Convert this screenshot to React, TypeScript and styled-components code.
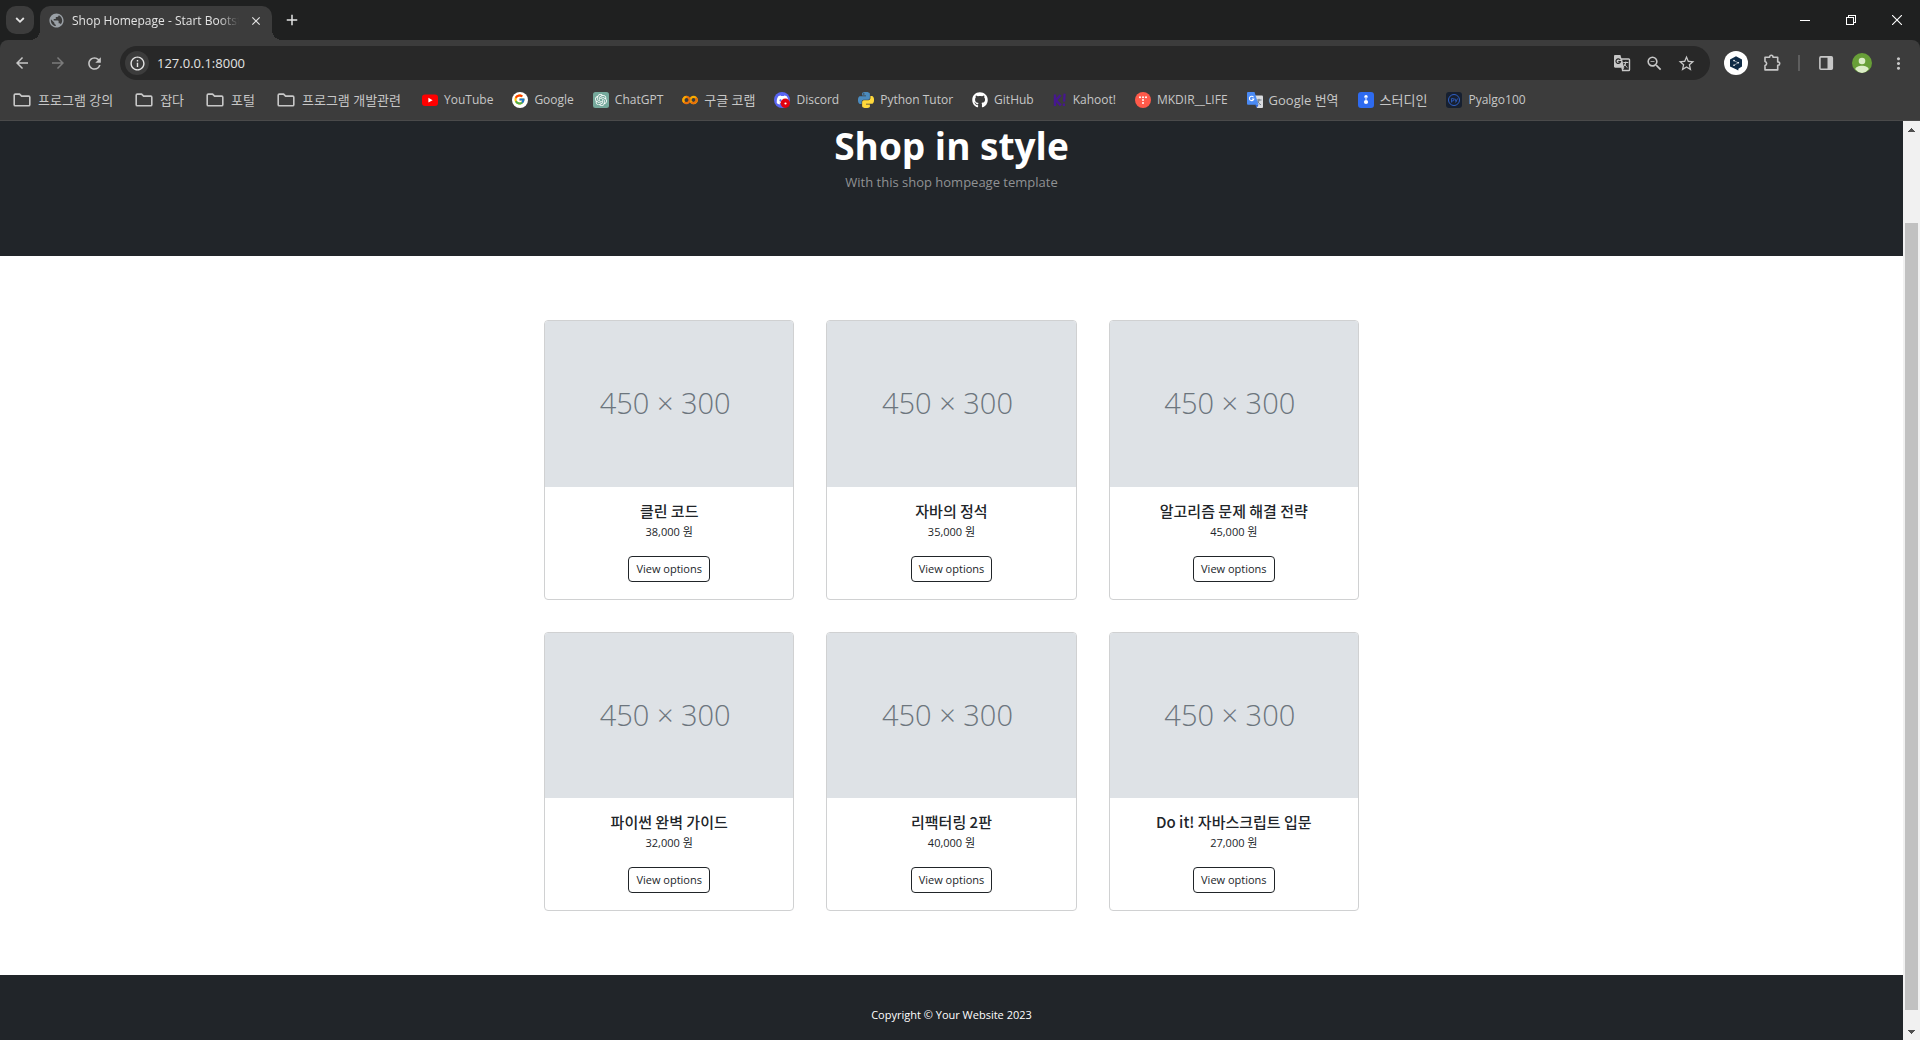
import React from 'react';
import styled, { createGlobalStyle } from 'styled-components';
import { FaGithub } from 'react-icons/fa';
import { FcGoogle } from 'react-icons/fc';
import { SiOpenai, SiDiscord } from 'react-icons/si';
import { MdArrowBack, MdArrowForward, MdRefresh, MdInfoOutline, MdStarBorder, MdZoomOut, MdMoreVert, MdPublic, MdClose, MdAdd } from 'react-icons/md';

const sans = '"Open Sans", "Noto Sans CJK KR", sans-serif';
const korean = '"Noto Sans CJK KR", "Open Sans", sans-serif';

const GlobalStyle = createGlobalStyle`
  *, *::before, *::after { box-sizing: border-box; }
  body { margin: 0; font-family: ${sans}; background: #fff; }
  button, input { font-family: inherit; }
  h1, h2, p, ul { margin: 0; padding: 0; }
`;

const Window = styled.div`
  display: flex;
  flex-direction: column;
  height: 100vh;
  overflow: hidden;
  background: #1f2020;
`;

/* ---------- tab strip ---------- */

const TabStrip = styled.div`
  display: flex;
  height: 40px;
  padding: 6px 0 0 6px;
  color: #e3e3e3;
`;

const PlainButton = styled.button`
  display: flex;
  align-items: center;
  justify-content: center;
  flex: none;
  padding: 0;
  border: 0;
  background: none;
  color: inherit;
`;

const TabSearch = styled(PlainButton)`
  width: 28px;
  height: 28px;
  border-radius: 10px;
  background: #3c3c3c;
`;

const Tab = styled.div`
  position: relative;
  display: flex;
  align-items: center;
  gap: 7px;
  width: 232px;
  margin-left: 6px;
  padding: 0 6px 5px 8px;
  border-radius: 10px 10px 0 0;
  background: #3c3c3c;

  &::before,
  &::after {
    content: '';
    position: absolute;
    bottom: 0;
    width: 10px;
    height: 10px;
  }
  &::before {
    right: 100%;
    background: radial-gradient(circle at 0 0, transparent 10px, #3c3c3c 10px);
  }
  &::after {
    left: 100%;
    background: radial-gradient(circle at 100% 0, transparent 10px, #3c3c3c 10px);
  }
`;

const TabTitle = styled.span`
  flex: 1;
  overflow: hidden;
  white-space: nowrap;
  font-size: 12px;
  line-height: 18px;
  mask-image: linear-gradient(90deg, #000 88%, transparent);
`;

const TabClose = styled(PlainButton)`
  width: 20px;
  height: 20px;
`;

const NewTab = styled(PlainButton)`
  width: 28px;
  height: 28px;
  margin-left: 6px;
`;

const WindowControls = styled.div`
  display: flex;
  margin-left: auto;
  color: #fff;
`;

const WindowButton = styled(PlainButton)`
  width: 46px;
  height: 28px;
`;

/* ---------- toolbar ---------- */

const Toolbar = styled.div`
  display: flex;
  align-items: center;
  gap: 8px;
  height: 46px;
  padding: 0 8px;
  border-radius: 8px 8px 0 0;
  background: #3c3c3c;
  color: #c7c7c7;
`;

const ToolButton = styled(PlainButton)<{ $dim?: boolean }>`
  width: 28px;
  height: 28px;
  color: ${(p) => (p.$dim ? '#7b7b7b' : '#c7c7c7')};
`;

const AddressBar = styled.div`
  display: flex;
  align-items: center;
  gap: 4px;
  flex: 1;
  height: 34px;
  margin: 0 4px;
  padding: 0 10px 0 5px;
  border-radius: 17px;
  background: #282828;
`;

const SiteInfo = styled(PlainButton)`
  width: 24px;
  height: 24px;
  margin-right: 4px;
  border-radius: 50%;
  background: #3c3c3c;
  color: #e3e3e3;
`;

const AddressInput = styled.input`
  flex: 1;
  min-width: 0;
  padding: 0;
  border: 0;
  outline: 0;
  background: none;
  color: #e3e3e3;
  font-size: 13px;
  line-height: 20px;
`;

const Divider = styled.span`
  width: 2px;
  height: 16px;
  margin: 0 4px;
  background: #5e5e5e;
`;

/* ---------- bookmarks ---------- */

const Bookmarks = styled.nav`
  display: flex;
  align-items: center;
  gap: 19px;
  height: 35px;
  padding: 0 12px 6px;
  border-bottom: 1px solid #4a4a4a;
  background: #3c3c3c;
`;

const Bookmark = styled.a<{ $folder: boolean; $korean: boolean }>`
  display: flex;
  align-items: center;
  gap: 6px;
  margin-right: ${(p) => (p.$folder ? '2px' : '0')};
  color: #c7c7c7;
  font-size: ${(p) => (p.$korean ? '13px' : '12px')};
  line-height: 18px;
  white-space: nowrap;
  text-decoration: none;
`;

/* ---------- page ---------- */

const Viewport = styled.div`
  display: flex;
  flex: 1;
  min-height: 0;
`;

const Page = styled.div`
  flex: 1;
  min-width: 0;
  overflow: hidden;
  background: #fff;
`;

const Hero = styled.header`
  padding: 2px 16px 64px;
  background: #212529;
  text-align: center;
`;

const HeroTitle = styled.h1`
  margin-bottom: 4px;
  color: #fff;
  font-size: 37px;
  font-weight: 700;
  line-height: 45px;
`;

const HeroLead = styled.p`
  color: #909294;
  font-size: 13px;
  line-height: 20px;
`;

const Products = styled.main`
  display: grid;
  grid-template-columns: repeat(3, 1fr);
  gap: 32px;
  width: 100%;
  max-width: 879px;
  margin: 0 auto;
  padding: 64px 32px;
`;

const Card = styled.article`
  display: flex;
  flex-direction: column;
  overflow: hidden;
  border: 1px solid #d0d1d2;
  border-radius: 4px;
  background: #fff;
`;

const Placeholder = styled.div`
  display: flex;
  align-items: center;
  justify-content: center;
  aspect-ratio: 3 / 2;
  padding: 0 8px 2px 0;
  background: #dee2e6;
  color: #6c757d;
  font-size: 29px;
  font-weight: 300;
`;

const CardBody = styled.div`
  display: flex;
  flex-direction: column;
  align-items: center;
  padding: 15px 16px 17px;
  color: #212529;
`;

const ProductName = styled.h2`
  margin-bottom: 4px;
  font-family: ${korean};
  font-size: 15px;
  font-weight: 500;
  line-height: 17px;
`;

const Price = styled.p`
  margin-bottom: 16px;
  font-size: 11px;
  line-height: 17px;
`;

const OptionsLink = styled.a`
  padding: 4px 7px;
  border: 1px solid #212529;
  border-radius: 4px;
  color: #212529;
  font-size: 11px;
  line-height: 16px;
  text-decoration: none;
`;

const Footer = styled.footer`
  padding: 32px 16px;
  background: #212529;
  color: #fff;
  font-size: 11px;
  line-height: 16px;
  text-align: center;
`;

/* ---------- scrollbar ---------- */

const Scrollbar = styled.div`
  display: flex;
  flex-direction: column;
  align-items: center;
  width: 17px;
  background: #f1f1f1;
`;

const ScrollArrow = styled(PlainButton)`
  width: 17px;
  height: 17px;
  color: #505050;
`;

const ScrollTrack = styled.div`
  display: grid;
  flex: 1;
  width: 13px;
  grid-template-rows: 85fr 787fr 13fr;
`;

const ScrollThumb = styled.div`
  grid-row: 2;
  background: #c1c1c1;
`;

/* ---------- icons ---------- */

const FolderIcon = () => (
  <svg width="20" height="20" viewBox="0 0 20 20" fill="none" stroke="#c7c7c7" strokeWidth="1.6" strokeLinejoin="round">
    <path d="M2.2 5.2c0-.7.4-1.1 1.1-1.1h4.3l2 2h7.1c.7 0 1.1.4 1.1 1.1v7.5c0 .7-.4 1.1-1.1 1.1H3.3c-.7 0-1.1-.4-1.1-1.1z" />
  </svg>
);

const YouTubeIcon = () => (
  <svg width="16" height="16" viewBox="0 0 16 16">
    <rect y="2.5" width="16" height="11.5" rx="3" fill="#f00" />
    <path d="M6.4 5.8v4.8L10.6 8.2z" fill="#fff" />
  </svg>
);

const GoogleIcon = () => (
  <svg width="16" height="16" viewBox="0 0 16 16">
    <circle cx="8" cy="8" r="8" fill="#fff" />
    <FcGoogle x="1.5" y="1.5" width="13" height="13" />
  </svg>
);

const ChatIcon = () => (
  <svg width="16" height="16" viewBox="0 0 16 16">
    <rect width="16" height="16" rx="2.5" fill="#75a99c" />
    <SiOpenai x="2" y="2" width="12" height="12" color="#fff" />
  </svg>
);

const ColabIcon = () => (
  <svg width="16" height="16" viewBox="0 0 16 16" fill="none" strokeWidth="2.2">
    <circle cx="11.6" cy="8" r="3.2" stroke="#f9ab00" />
    <circle cx="4.4" cy="8" r="3.2" stroke="#e8710a" />
    <path d="M9.3 10.2A3.2 3.2 0 0 0 13.9 5.8" stroke="#e8710a" />
    <path d="M2.2 10.2A3.2 3.2 0 0 1 4.4 4.8" stroke="#f9ab00" />
  </svg>
);

const DiscordIcon = () => (
  <svg width="16" height="16" viewBox="0 0 16 16">
    <circle cx="8" cy="8" r="8" fill="#5865f2" />
    <SiDiscord x="2.5" y="2" width="11" height="11" color="#fff" />
    <circle cx="11.3" cy="11.3" r="4.7" fill="#e0000f" />
    <circle cx="11.5" cy="11.5" r="1.1" fill="#fff" />
  </svg>
);

const PythonIcon = () => (
  <svg width="16" height="16" viewBox="0 0 24 24">
    <path fill="#4b8bbe" d="M14.25.18l.9.2.73.26.59.3.45.32.34.34.25.34.16.33.1.3.04.26.02.2-.01.13V8.5l-.05.63-.13.55-.21.46-.26.38-.3.31-.33.25-.35.19-.35.14-.33.1-.3.07-.26.04-.21.02H8.77l-.69.05-.59.14-.5.22-.41.27-.33.32-.27.35-.2.36-.15.37-.1.35-.07.32-.04.27-.02.21v3.06H3.17l-.21-.03-.28-.07-.32-.12-.35-.18-.36-.26-.36-.36-.35-.46-.32-.59-.28-.73-.21-.88-.14-1.05-.05-1.23.06-1.22.16-1.04.24-.87.32-.71.36-.57.4-.44.42-.33.42-.24.4-.16.36-.1.32-.05.24-.01h.16l.06.01h8.16v-.83H6.18l-.01-2.75-.02-.37.05-.34.11-.31.17-.28.25-.26.31-.23.38-.2.44-.18.51-.15.58-.12.64-.1.71-.06.77-.04.84-.02 1.27.05zm-6.3 1.98l-.23.33-.08.41.08.41.23.34.33.22.41.09.41-.09.33-.22.23-.34.08-.41-.08-.41-.23-.33-.33-.22-.41-.09-.41.09z" />
    <path fill="#ffd83b" d="M21.04 6.11l.28.06.32.12.35.18.36.27.36.35.35.47.32.59.28.73.21.88.14 1.04.05 1.23-.06 1.23-.16 1.04-.24.86-.32.71-.36.57-.4.45-.42.33-.42.24-.4.16-.36.09-.32.05-.24.02-.16-.01h-8.22v.82h5.84l.01 2.76.02.36-.05.34-.11.31-.17.29-.25.25-.31.24-.38.2-.44.17-.51.15-.58.13-.64.09-.71.07-.77.04-.84.01-1.27-.04-1.07-.14-.9-.2-.73-.25-.59-.3-.45-.33-.34-.34-.25-.34-.16-.33-.1-.3-.04-.25-.02-.2.01-.13v-5.34l.05-.64.13-.54.21-.46.26-.38.3-.32.33-.24.35-.2.35-.14.33-.1.3-.06.26-.04.21-.02.13-.01h5.84l.69-.05.59-.14.5-.21.41-.28.33-.32.27-.35.2-.36.15-.36.1-.35.07-.32.04-.28.02-.21V6.07h2.09l.14.01z" />
  </svg>
);

const GitHubIcon = () => <FaGithub size={16} color="#fff" />;

const KahootIcon = () => (
  <svg width="14" height="16" viewBox="0 0 14 16" fill="none" stroke="#46178f" strokeWidth="2.4">
    <path d="M2 2.5v11.5M7.6 3L3 8.2l4.8 5.2" />
    <path d="M11.6 1.6l-.5 8M10.900 11.6v2.4" strokeWidth="2.2" />
  </svg>
);

const TistoryIcon = () => (
  <svg width="16" height="16" viewBox="0 0 16 16">
    <circle cx="8" cy="8" r="8" fill="#ff5a4a" />
    <g fill="#fff">
      <circle cx="5" cy="5.2" r="1" />
      <circle cx="8" cy="5.2" r="1" />
      <circle cx="11" cy="5.2" r="1" />
      <circle cx="8" cy="8.1" r="1" />
      <circle cx="8" cy="11" r="1" />
    </g>
  </svg>
);

const TranslateIcon = () => (
  <svg width="16" height="16" viewBox="0 0 16 16">
    <path d="M6 3.5h9a1 1 0 0 1 1 1V15a1 1 0 0 1-1 1h-5z" fill="#dadce0" />
    <path d="M9.5 8h5M12 6.8V8c-.2 2-1.2 3.2-2.2 4M10.5 9.2c.8 1.8 2 2.8 3.4 3.6" stroke="#6b7785" fill="none" />
    <path d="M1 0h6.5l4 12.8H1a1 1 0 0 1-1-1V1a1 1 0 0 1 1-1z" fill="#4a8af4" />
    <path d="M6.5 5.2A2.2 2.2 0 1 0 6.8 7H4.8" stroke="#fff" strokeWidth="1.1" fill="none" />
    <path d="M8.2 12.8h3.3L9.8 16z" fill="#3367d6" />
  </svg>
);

const StudyIcon = () => (
  <svg width="16" height="16" viewBox="0 0 16 16">
    <rect width="16" height="16" rx="3" fill="#2e6bf0" />
    <circle cx="8" cy="4.8" r="1.7" fill="#fff" />
    <circle cx="8" cy="10" r="2.1" fill="#fff" />
    <path d="M7.2 5h1.6v3H7.2z" fill="#a9c4ff" />
  </svg>
);

const PyalgoIcon = () => (
  <svg width="16" height="16" viewBox="0 0 16 16" fill="none" stroke="#2f5fc4">
    <rect width="16" height="16" rx="3" fill="#172030" stroke="none" />
    <circle cx="8" cy="8" r="5.5" />
    <path d="M5.6 10.5v-4h1.2a1.2 1.2 0 0 1 0 2.400H5.600M8.800 6.500l1.300 3M11.600 6.500l-2 4" strokeWidth=".9" />
  </svg>
);

const PageTranslateIcon = () => (
  <svg width="18" height="18" viewBox="0 0 18 18">
    <path d="M8.5 5h7.2c.5 0 .8.3.8.8v9.900c0 .5-.3.8-.8.8H9.600z" fill="none" stroke="#c7c7c7" strokeWidth="1.4" />
    <path d="M10.300 8.500h5M12.800 7.500v1c-.1 1.600-.8 2.900-1.800 3.800M11.300 9.700c.7 1.700 1.800 3 3.200 4" fill="none" stroke="#c7c7c7" />
    <path d="M2.200 1h5.200l3.900 12.700H2.200c-.7 0-1.200-.5-1.200-1.200V2.200C1 1.500 1.500 1 2.200 1z" fill="#c7c7c7" />
    <path d="M7.200 5.900A2.300 2.300 0 1 0 7.500 7.700H5.300" fill="none" stroke="#282828" strokeWidth="1.2" />
    <path d="M8.300 13.700h3l-1.800 2.600z" fill="#c7c7c7" />
  </svg>
);

const ExtensionIcon = () => (
  <svg width="20" height="20" viewBox="0 0 20 20" fill="none" stroke="#c7c7c7" strokeWidth="1.6" strokeLinejoin="round">
    <path d="M3 4.300h4.600V4a1.700 1.700 0 0 1 3.400 0v.3h4.700V8.900H16a1.700 1.700 0 0 1 0 3.400h-.3v4.600H3v-4.300a2.100 2.100 0 0 0 0-4.100z" />
  </svg>
);

const DeeplIcon = () => (
  <svg width="26" height="26" viewBox="0 0 26 26">
    <circle cx="13" cy="13" r="12" fill="#fff" />
    <path d="M13 6.200l6 3.400v7l-3.600 2.100-.1 1.900-2.300-1.300-6-2.700v-7z" fill="#0f2b46" />
    <path d="M11 10.600l4.200 2.200-4.200 2.400" fill="none" stroke="#fff" strokeWidth=".5" />
    <g fill="#fff">
      <circle cx="11" cy="10.600" r=".8" />
      <circle cx="15.300" cy="12.800" r=".8" />
      <circle cx="11" cy="15.200" r=".8" />
    </g>
  </svg>
);

const SidePanelIcon = () => (
  <svg width="16" height="16" viewBox="0 0 16 16">
    <rect x="1.9" y="1.9" width="12.4" height="12.4" rx="1" fill="none" stroke="#c7c7c7" strokeWidth="1.6" />
    <path d="M9.5 2H14v12H9.5z" fill="#c7c7c7" />
  </svg>
);

const AvatarIcon = () => (
  <svg width="20" height="20" viewBox="0 0 20 20">
    <circle cx="10" cy="10" r="10" fill="#689f38" />
    <circle cx="10" cy="8" r="3.3" fill="#dcedc8" />
    <path d="M3.3 16.2c0-2.2 3.6-3.5 6.7-3.5s6.7 1.3 6.7 3.5A9.900 9.900 0 0 1 10 20a9.900 9.900 0 0 1-6.700-3.800z" fill="#dcedc8" />
  </svg>
);

const ChevronIcon = () => (
  <svg width="10" height="8" viewBox="0 0 10 8" fill="none" stroke="#e3e3e3" strokeWidth="1.8">
    <path d="M1.2 2L5 5.800 8.800 2" />
  </svg>
);

const MinimizeIcon = () => (
  <svg width="10" height="10" shapeRendering="crispEdges">
    <path d="M0 5h10v1H0z" fill="#fff" />
  </svg>
);

const RestoreIcon = () => (
  <svg width="10" height="10" fill="none" stroke="#fff" shapeRendering="crispEdges">
    <path d="M.5 2.5h7v7h-7zM2.5 2.5v-2h7v7h-2" />
  </svg>
);

const CloseIcon = () => (
  <svg width="10" height="10" stroke="#fff" strokeWidth="1.1">
    <path d="M0 0l10 10M10 0L0 10" />
  </svg>
);

const ArrowGlyph = ({ down }: { down?: boolean }) => (
  <svg width="7" height="4" viewBox="0 0 7 4" shapeRendering="crispEdges">
    <path d={down ? 'M0 0h7L3.5 4z' : 'M0 4h7L3.5 0z'} fill="currentColor" />
  </svg>
);

/* ---------- data ---------- */

const bookmarks: { label: string; Icon: React.ComponentType }[] = [
  { label: '프로그램 강의', Icon: FolderIcon },
  { label: '잡다', Icon: FolderIcon },
  { label: '포털', Icon: FolderIcon },
  { label: '프로그램 개발관련', Icon: FolderIcon },
  { label: 'YouTube', Icon: YouTubeIcon },
  { label: 'Google', Icon: GoogleIcon },
  { label: 'ChatGPT', Icon: ChatIcon },
  { label: '구글 코랩', Icon: ColabIcon },
  { label: 'Discord', Icon: DiscordIcon },
  { label: 'Python Tutor', Icon: PythonIcon },
  { label: 'GitHub', Icon: GitHubIcon },
  { label: 'Kahoot!', Icon: KahootIcon },
  { label: 'MKDIR__LIFE', Icon: TistoryIcon },
  { label: 'Google 번역', Icon: TranslateIcon },
  { label: '스터디인', Icon: StudyIcon },
  { label: 'Pyalgo100', Icon: PyalgoIcon },
];

const hasHangul = (text: string) => /[가-힣]/.test(text);

const products = [
  { name: '클린 코드', price: '38,000 원' },
  { name: '자바의 정석', price: '35,000 원' },
  { name: '알고리즘 문제 해결 전략', price: '45,000 원' },
  { name: '파이썬 완벽 가이드', price: '32,000 원' },
  { name: '리팩터링 2판', price: '40,000 원' },
  { name: 'Do it! 자바스크립트 입문', price: '27,000 원' },
];

export default function App() {
  return (
    <Window>
      <GlobalStyle />
      <TabStrip>
        <TabSearch aria-label="Search tabs"><ChevronIcon /></TabSearch>
        <Tab>
          <MdPublic size={17} color="#9aa0a6" />
          <TabTitle>Shop Homepage - Start Bootstrap</TabTitle>
          <TabClose aria-label="Close tab"><MdClose size={14} /></TabClose>
        </Tab>
        <NewTab aria-label="New tab"><MdAdd size={18} /></NewTab>
        <WindowControls>
          <WindowButton aria-label="Minimize"><MinimizeIcon /></WindowButton>
          <WindowButton aria-label="Restore"><RestoreIcon /></WindowButton>
          <WindowButton aria-label="Close"><CloseIcon /></WindowButton>
        </WindowControls>
      </TabStrip>

      <Toolbar>
        <ToolButton aria-label="Back"><MdArrowBack size={18} /></ToolButton>
        <ToolButton aria-label="Forward" $dim><MdArrowForward size={18} /></ToolButton>
        <ToolButton aria-label="Reload"><MdRefresh size={19} /></ToolButton>
        <AddressBar>
          <SiteInfo aria-label="Site information"><MdInfoOutline size={17} /></SiteInfo>
          <AddressInput aria-label="Address" defaultValue="127.0.0.1:8000" />
          <ToolButton aria-label="Translate page"><PageTranslateIcon /></ToolButton>
          <ToolButton aria-label="Zoom"><MdZoomOut size={19} /></ToolButton>
          <ToolButton aria-label="Bookmark this page"><MdStarBorder size={19} /></ToolButton>
        </AddressBar>
        <ToolButton aria-label="DeepL"><DeeplIcon /></ToolButton>
        <ToolButton aria-label="Extensions"><ExtensionIcon /></ToolButton>
        <Divider />
        <ToolButton aria-label="Side panel"><SidePanelIcon /></ToolButton>
        <ToolButton aria-label="Profile"><AvatarIcon /></ToolButton>
        <ToolButton aria-label="Menu"><MdMoreVert size={19} /></ToolButton>
      </Toolbar>

      <Bookmarks aria-label="Bookmarks">
        {bookmarks.map(({ label, Icon }) => (
          <Bookmark key={label} href="#" $folder={Icon === FolderIcon} $korean={hasHangul(label)}>
            <Icon />
            {label}
          </Bookmark>
        ))}
      </Bookmarks>

      <Viewport>
        <Page>
          <Hero>
            <HeroTitle>Shop in style</HeroTitle>
            <HeroLead>With this shop hompeage template</HeroLead>
          </Hero>
          <Products>
            {products.map((product) => (
              <Card key={product.name}>
                <Placeholder>450 × 300</Placeholder>
                <CardBody>
                  <ProductName>{product.name}</ProductName>
                  <Price>{product.price}</Price>
                  <OptionsLink href="#">View options</OptionsLink>
                </CardBody>
              </Card>
            ))}
          </Products>
          <Footer>
            <p>Copyright © Your Website 2023</p>
          </Footer>
        </Page>
        <Scrollbar>
          <ScrollArrow aria-label="Scroll up"><ArrowGlyph /></ScrollArrow>
          <ScrollTrack><ScrollThumb /></ScrollTrack>
          <ScrollArrow aria-label="Scroll down"><ArrowGlyph down /></ScrollArrow>
        </Scrollbar>
      </Viewport>
    </Window>
  );
}
